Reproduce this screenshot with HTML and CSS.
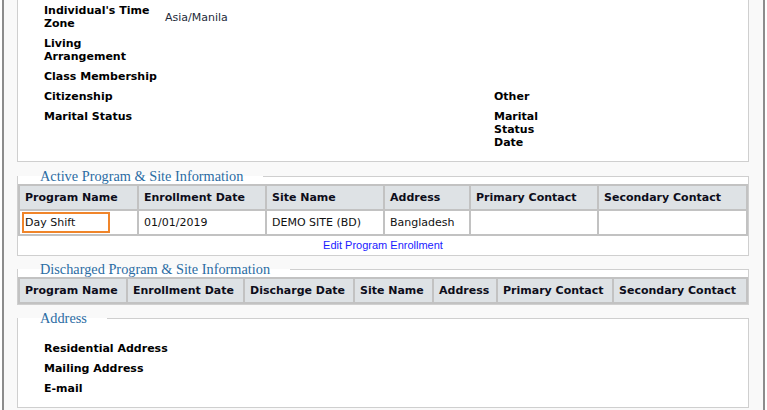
FILE: index.html
```html
<!DOCTYPE html>
<html>
<head>
<meta charset="utf-8">
<link rel="stylesheet" href="styles.css">
</head>
<body>
<div class="page">
  <fieldset class="box box-first">
    <table class="info">
      <colgroup><col class="c-l1"><col class="c-v1"><col class="c-l2"><col></colgroup>
      <tr><td class="lbl">Individual's Time Zone</td><td class="val">Asia/Manila</td><td></td><td></td></tr>
      <tr><td class="lbl">Living Arrangement</td><td class="val"></td><td></td><td></td></tr>
      <tr><td class="lbl">Class Membership</td><td class="val"></td><td></td><td></td></tr>
      <tr><td class="lbl">Citizenship</td><td class="val"></td><td class="lbl">Other</td><td></td></tr>
      <tr><td class="lbl">Marital Status</td><td class="val"></td><td class="lbl">Marital Status Date</td><td></td></tr>
    </table>
  </fieldset>

  <fieldset class="box">
    <legend>Active Program &amp; Site Information</legend>
    <table class="grid">
      <colgroup><col class="a1"><col class="a2"><col class="a3"><col class="a4"><col class="a5"><col class="a6"></colgroup>
      <tr><th>Program Name</th><th>Enrollment Date</th><th>Site Name</th><th>Address</th><th>Primary Contact</th><th>Secondary Contact</th></tr>
      <tr class="data"><td class="first"><span class="focus">Day Shift</span></td><td>01/01/2019</td><td>DEMO SITE (BD)</td><td>Bangladesh</td><td></td><td></td></tr>
    </table>
    <div class="linkrow"><a href="#" class="link">Edit Program Enrollment</a></div>
  </fieldset>

  <fieldset class="box">
    <legend>Discharged Program &amp; Site Information</legend>
    <table class="grid">
      <colgroup><col class="d1"><col class="d2"><col class="d3"><col class="d4"><col class="d5"><col class="d6"><col class="d7"></colgroup>
      <tr><th>Program Name</th><th>Enrollment Date</th><th>Discharge Date</th><th>Site Name</th><th>Address</th><th>Primary Contact</th><th>Secondary Contact</th></tr>
    </table>
  </fieldset>

  <fieldset class="box box-address">
    <legend>Address</legend>
    <table class="info">
      <tr><td class="lbl nowrap">Residential Address</td></tr>
      <tr><td class="lbl nowrap">Mailing Address</td></tr>
      <tr><td class="lbl nowrap">E-mail</td></tr>
    </table>
  </fieldset>
</div>
</body>
</html>
```

FILE: styles.css
```css
html, body {
  margin: 0;
  padding: 0;
  background: #ffffff;
}

body {
  font-family: "DejaVu Sans", Verdana, sans-serif;
  font-size: 11px;
  color: #000;
  overflow: hidden;
}

.page {
  margin: 0 2px;
  border-left: 2px solid #8c8c8c;
  border-right: 2px solid #8c8c8c;
  background: #f9f9f9;
  padding: 0 14px 3px 13px;
  min-height: 410px;
  box-sizing: border-box;
}

.box {
  margin: 0 0 5px 0;
  padding: 0;
  border: 1px solid #cfcfcf;
  background: #fff;
  min-width: 0;
}

.box-first {
  margin-top: -10px;
  margin-bottom: 6px;
  padding: 10px 0 8px 0;
}

.box-address {
  padding-bottom: 8px;
}

legend {
  font-family: "Liberation Serif", "Times New Roman", serif;
  font-size: 14.3px;
  line-height: 16px;
  color: #2b6ca3;
  padding: 0 20px 0 22px;
  margin-left: 0;
}

.info {
  border-collapse: collapse;
  margin-left: 22px;
}

.box-address .info {
  margin-top: 13px;
}

.info td {
  padding: 3px 4px 4px 4px;
  line-height: 13px;
  vertical-align: middle;
}

.info td.lbl {
  font-weight: bold;
  vertical-align: top;
}

.info td.val {
  color: #1e2a3a;
}

.nowrap { white-space: nowrap; }

.c-l1 { width: 121px; }
.c-v1 { width: 329px; }
.c-l2 { width: 56px; }

.grid {
  width: 100%;
  border-collapse: separate;
  border-spacing: 0;
  border-top: 2px solid #c2c2c2;
  border-left: 2px solid #c2c2c2;
  table-layout: fixed;
}

.grid th,
.grid td {
  border-right: 2px solid #c2c2c2;
  border-bottom: 2px solid #c2c2c2;
  text-align: left;
  line-height: 13px;
  white-space: nowrap;
  overflow: hidden;
}

.grid th {
  background: #dee2e5;
  font-weight: bold;
  color: #0d0d1a;
  padding: 5px 5px 5px 5px;
  height: 13px;
}

.grid tr.data td {
  padding: 0 5px;
  height: 23px;
  color: #111;
}

.grid tr.data td.first {
  padding: 0 2px;
}

.focus {
  display: inline-block;
  box-sizing: border-box;
  width: 88px;
  height: 21px;
  line-height: 17px;
  padding: 0 1px;
  border: 2px solid #f0852a;
  vertical-align: middle;
}

.a1 { width: 119px; }
.a2 { width: 128px; }
.a3 { width: 118px; }
.a4 { width: 86px; }
.a5 { width: 128px; }
.a6 { width: 149px; }

.d1 { width: 108px; }
.d2 { width: 117px; }
.d3 { width: 110px; }
.d4 { width: 79px; }
.d5 { width: 64px; }
.d6 { width: 116px; }
.d7 { width: 134px; }

.linkrow {
  text-align: center;
  padding: 2px 0 2px 0;
  line-height: 15px;
}

.link {
  font-family: "Liberation Sans", Arial, sans-serif;
  font-size: 11px;
  color: #1a1aff;
  text-decoration: none;
}
```
